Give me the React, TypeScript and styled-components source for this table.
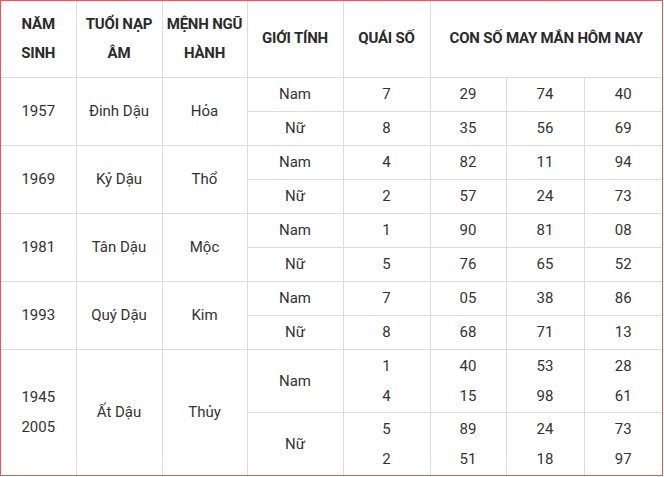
import React from 'react';
import styled, { createGlobalStyle } from 'styled-components';

const GlobalStyle = createGlobalStyle`
  html, body {
    margin: 0;
    padding: 0;
    background: #ffffff;
  }
  body {
    font-family: Roboto, "Liberation Sans", Arial, sans-serif;
    color: #333333;
  }
`;

const Frame = styled.div`
  box-sizing: border-box;
  width: 663px;
  height: 476px;
  border: 1px solid #e25a5a;
  overflow: hidden;
  background: #ffffff;
`;

const Table = styled.table`
  width: 661px;
  border-collapse: collapse;
  table-layout: fixed;
  font-size: 15px;
`;

const HeadCell = styled.th<{ $pad?: number }>`
  height: 76px;
  padding: 0 ${({ $pad }) => $pad ?? 0}px;
  font-weight: 700;
  color: #2a2a2a;
  text-transform: uppercase;
  letter-spacing: -0.2px;
  line-height: 29px;
  text-align: center;
  vertical-align: middle;
  border-right: 1px solid #dcdcdc;
  border-bottom: 1px solid #dcdcdc;
  box-sizing: border-box;
  &:last-child {
    border-right: none;
  }
`;

const Cell = styled.td<{ $h?: number; $last?: boolean }>`
  height: ${({ $h }) => $h ?? 34}px;
  padding: 0;
  text-align: center;
  vertical-align: middle;
  line-height: 30px;
  color: #333333;
  border-right: ${({ $last }) => ($last ? 'none' : '1px solid #dcdcdc')};
  border-bottom: 1px solid #dcdcdc;
  box-sizing: border-box;
`;

const Line = styled.div`
  line-height: 30px;
`;

type Gender = {
  label: string;
  quai: string[];
  nums: string[][];
};

type Group = {
  years: string[];
  napAm: string;
  menh: string;
  genders: Gender[];
  tall?: boolean;
};

const groups: Group[] = [
  {
    years: ['1957'],
    napAm: 'Đinh Dậu',
    menh: 'Hỏa',
    genders: [
      { label: 'Nam', quai: ['7'], nums: [['29', '74', '40']] },
      { label: 'Nữ', quai: ['8'], nums: [['35', '56', '69']] },
    ],
  },
  {
    years: ['1969'],
    napAm: 'Kỷ Dậu',
    menh: 'Thổ',
    genders: [
      { label: 'Nam', quai: ['4'], nums: [['82', '11', '94']] },
      { label: 'Nữ', quai: ['2'], nums: [['57', '24', '73']] },
    ],
  },
  {
    years: ['1981'],
    napAm: 'Tân Dậu',
    menh: 'Mộc',
    genders: [
      { label: 'Nam', quai: ['1'], nums: [['90', '81', '08']] },
      { label: 'Nữ', quai: ['5'], nums: [['76', '65', '52']] },
    ],
  },
  {
    years: ['1993'],
    napAm: 'Quý Dậu',
    menh: 'Kim',
    genders: [
      { label: 'Nam', quai: ['7'], nums: [['05', '38', '86']] },
      { label: 'Nữ', quai: ['8'], nums: [['68', '71', '13']] },
    ],
  },
  {
    years: ['1945', '2005'],
    napAm: 'Ất Dậu',
    menh: 'Thủy',
    tall: true,
    genders: [
      {
        label: 'Nam',
        quai: ['1', '4'],
        nums: [
          ['40', '53', '28'],
          ['15', '98', '61'],
        ],
      },
      {
        label: 'Nữ',
        quai: ['5', '2'],
        nums: [
          ['89', '24', '73'],
          ['51', '18', '97'],
        ],
      },
    ],
  },
];

const widths = [75, 86, 85, 96, 87, 76, 78, 78];

const Stack = ({ items }: { items: string[] }) => (
  <>
    {items.map((t, i) => (
      <Line key={i}>{t}</Line>
    ))}
  </>
);

export default function App() {
  return (
    <>
      <GlobalStyle />
      <Frame>
        <Table>
          <colgroup>
            {widths.map((w, i) => (
              <col key={i} style={{ width: w }} />
            ))}
          </colgroup>
          <thead>
            <tr>
              <HeadCell $pad={6}>Năm sinh</HeadCell>
              <HeadCell>Tuổi nạp âm</HeadCell>
              <HeadCell>Mệnh ngũ hành</HeadCell>
              <HeadCell>Giới tính</HeadCell>
              <HeadCell>Quái số</HeadCell>
              <HeadCell colSpan={3}>Con số may mắn hôm nay</HeadCell>
            </tr>
          </thead>
          <tbody>
            {groups.map((g) =>
              g.genders.map((gd, gi) => {
                const h = g.tall ? 63 : 34;
                return (
                  <tr key={g.years.join('-') + gd.label}>
                    {gi === 0 && (
                      <>
                        <Cell rowSpan={2} $h={h * 2}>
                          <Stack items={g.years} />
                        </Cell>
                        <Cell rowSpan={2}>{g.napAm}</Cell>
                        <Cell rowSpan={2}>{g.menh}</Cell>
                      </>
                    )}
                    <Cell $h={h}>{gd.label}</Cell>
                    <Cell>
                      <Stack items={gd.quai} />
                    </Cell>
                    {[0, 1, 2].map((c) => (
                      <Cell key={c} $last={c === 2}>
                        <Stack items={gd.nums.map((row) => row[c])} />
                      </Cell>
                    ))}
                  </tr>
                );
              })
            )}
          </tbody>
        </Table>
      </Frame>
    </>
  );
}
